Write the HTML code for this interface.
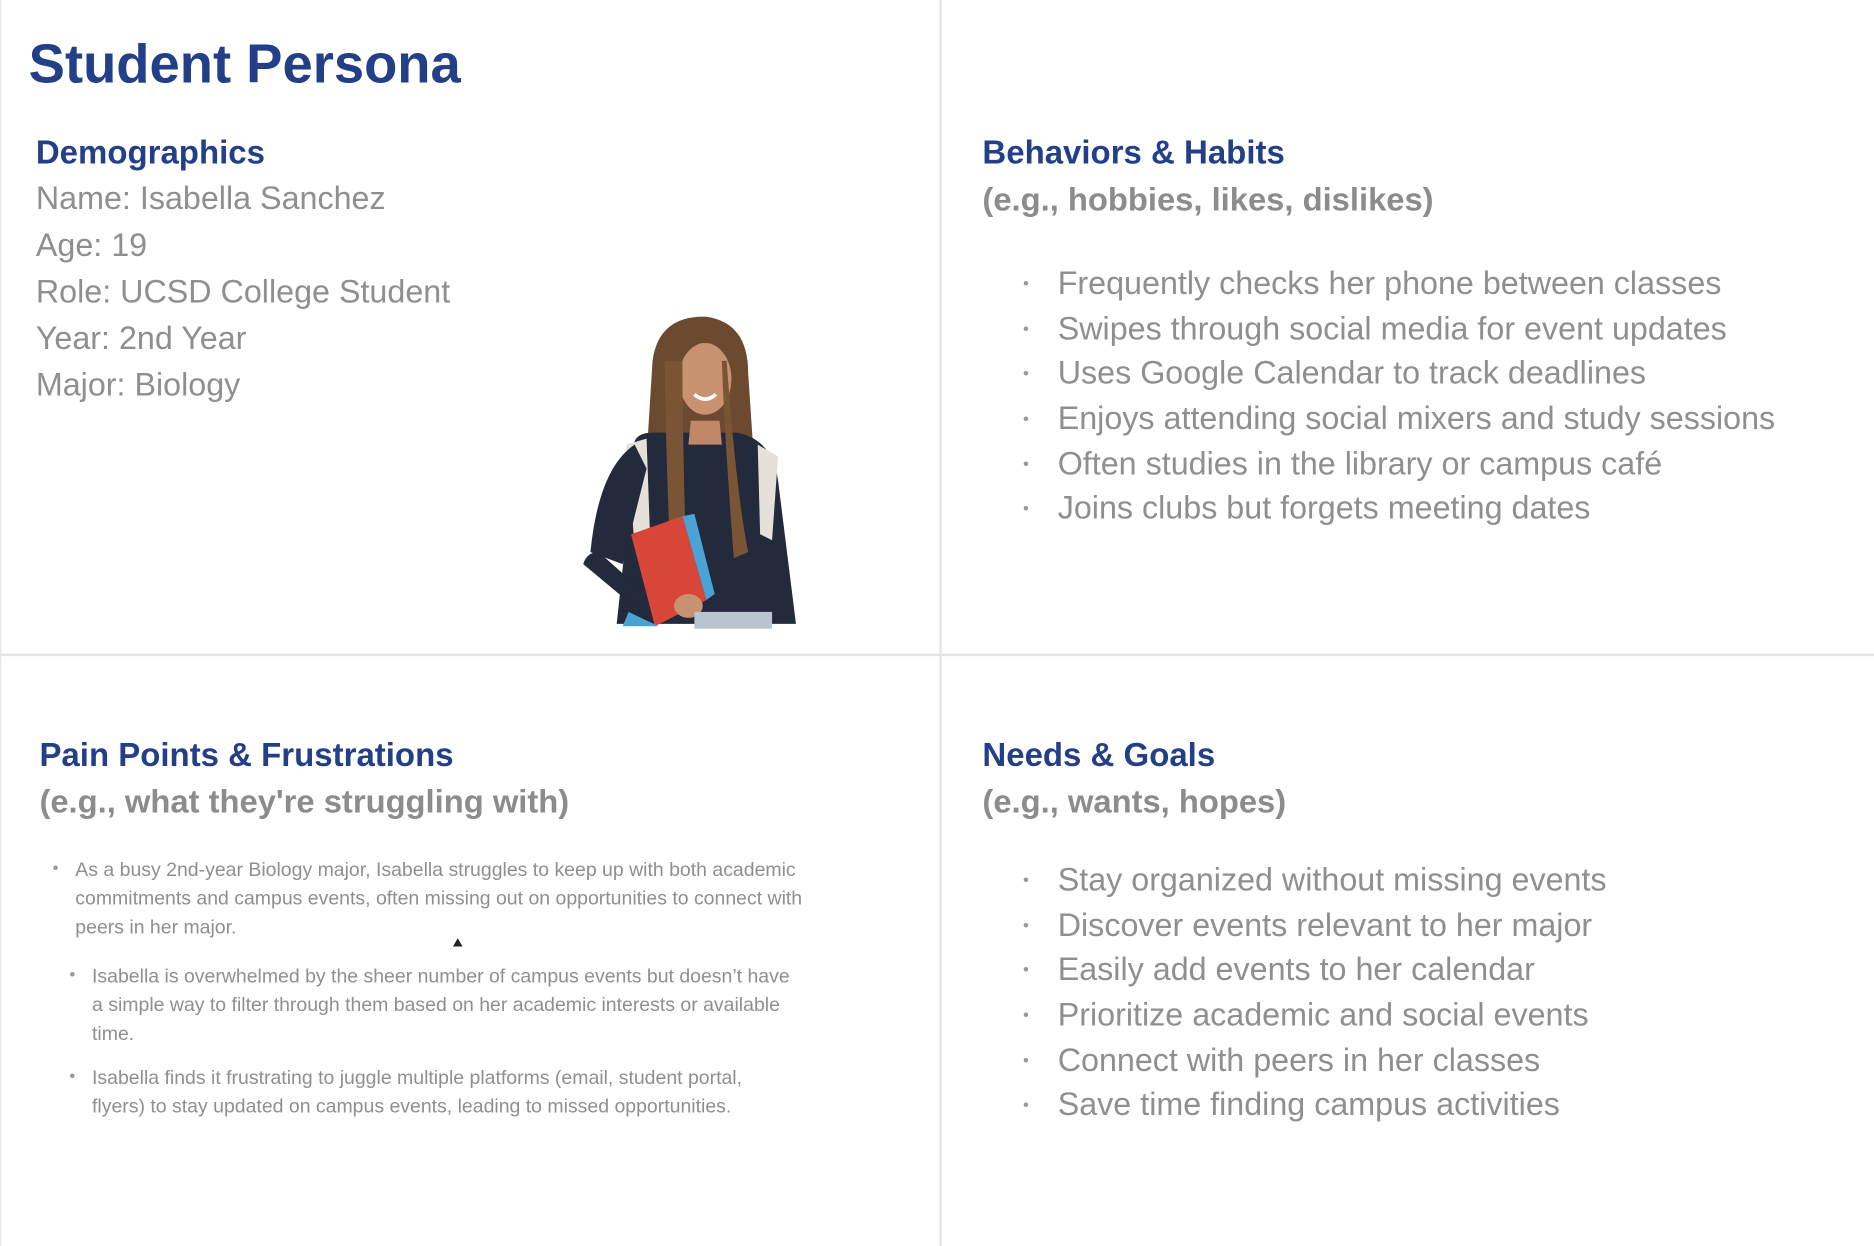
<!DOCTYPE html>
<html><head><meta charset="utf-8"><style>
html,body{margin:0;padding:0;background:#fff;overflow:hidden;}
#wrap{width:1568px;height:1043px;position:relative;transform:scale(1.19515);transform-origin:0 0;font-family:"Liberation Sans",sans-serif;}
.a{position:absolute;white-space:nowrap;}
.h{color:#223f88;font-weight:bold;font-size:27.6px;}
.s{color:#8c8c8c;font-weight:bold;font-size:27.4px;}
.t{color:#8f8f8f;font-size:27px;}
.b{color:#8f8f8f;font-size:27px;line-height:37.7px;height:37.7px;}
.sm{color:#8f8f8f;font-size:16.3px;line-height:24px;white-space:normal;}
.dot{color:#999;font-size:14px;}
.b .dot{display:inline-block;width:29px;vertical-align:top;line-height:37.7px;}
</style></head><body><div id="wrap">
<div class="a" style="left:0;top:0;width:1px;height:1043px;background:#e6e6e6"></div>
<div class="a" style="left:786px;top:0;width:2px;height:1043px;background:#e4e4e4"></div>
<div class="a" style="left:0;top:547px;width:1568px;height:2px;background:#e4e4e4"></div>

<div class="a" style="left:24px;top:28px;font-size:45.5px;font-weight:bold;color:#223f88">Student Persona</div>

<div class="a h" style="left:30px;top:112px">Demographics</div>
<div class="a t" style="left:30px;top:151px">Name: Isabella Sanchez</div>
<div class="a t" style="left:30px;top:190px">Age: 19</div>
<div class="a t" style="left:30px;top:229px">Role: UCSD College Student</div>
<div class="a t" style="left:30px;top:268px">Year: 2nd Year</div>
<div class="a t" style="left:30px;top:307px">Major: Biology</div>

<svg class="a" style="left:486px;top:262px" width="186" height="266" viewBox="0 0 186 266">
<path d="M60 40 Q65 2 105 3 Q140 8 140 50 L150 200 L50 200 Z" fill="#6b4a30"/>
<path d="M45 120 Q40 100 60 100 L130 100 Q160 105 165 140 L180 260 L30 260 Z" fill="#222a3c"/>
<path d="M38 110 L55 105 L58 190 L45 195 Z" fill="#e5e1d8"/>
<path d="M148 110 L165 120 L160 190 L150 185 Z" fill="#e5e1d8"/>
<path d="M8 200 Q15 130 45 110 L55 130 L35 210 Z" fill="#222a3c"/>
<path d="M2 210 Q5 200 15 200 L60 240 L50 250 Z" fill="#222a3c"/>
<ellipse cx="104" cy="55" rx="22" ry="30" fill="#c8916f"/>
<path d="M92 90 L116 90 L118 110 L90 110 Z" fill="#c08868"/>
<path d="M95 68 Q104 76 113 68" stroke="#fff" stroke-width="3" fill="none"/>
<path d="M70 40 Q72 150 75 200 L88 200 Q85 100 85 40 Z" fill="#7a5535"/>
<path d="M122 40 Q130 150 140 200 L128 205 Q120 100 118 40 Z" fill="#7a5535"/>
<path d="M42 185 L85 170 L105 240 L62 262 Z" fill="#d8463a"/>
<path d="M85 170 L95 168 L112 235 L105 240 Z" fill="#4aa3d4"/>
<path d="M35 262 L40 250 L65 262 Z" fill="#4aa3d4"/>
<ellipse cx="90" cy="245" rx="12" ry="10" fill="#c8916f"/>
<rect x="95" y="250" width="65" height="14" fill="#b8c4d0"/>
</svg>

<div class="a h" style="left:822px;top:112px">Behaviors &amp; Habits</div>
<div class="a s" style="left:822px;top:151px">(e.g., hobbies, likes, dislikes)</div>
<div class="a" style="left:856px;top:219px">
<div class="b"><span class="dot">•</span>Frequently checks her phone between classes</div>
<div class="b"><span class="dot">•</span>Swipes through social media for event updates</div>
<div class="b"><span class="dot">•</span>Uses Google Calendar to track deadlines</div>
<div class="b"><span class="dot">•</span>Enjoys attending social mixers and study sessions</div>
<div class="b"><span class="dot">•</span>Often studies in the library or campus café</div>
<div class="b"><span class="dot">•</span>Joins clubs but forgets meeting dates</div>
</div>

<div class="a h" style="left:33px;top:616px">Pain Points &amp; Frustrations</div>
<div class="a s" style="left:33px;top:655px">(e.g., what they're struggling with)</div>
<div class="a dot" style="left:44px;top:718px">•</div>
<div class="a sm" style="left:63px;top:716px;width:640px">As a busy 2nd-year Biology major, Isabella struggles to keep up with both academic commitments and campus events, often missing out on opportunities to connect with peers in her major.</div>
<div class="a" style="left:379px;top:785px;width:0;height:0;border-left:4px solid transparent;border-right:4px solid transparent;border-bottom:7px solid #222"></div>
<div class="a dot" style="left:58px;top:807px">•</div>
<div class="a sm" style="left:77px;top:805px;width:590px">Isabella is overwhelmed by the sheer number of campus events but doesn’t have a simple way to filter through them based on her academic interests or available time.</div>
<div class="a dot" style="left:58px;top:892px">•</div>
<div class="a sm" style="left:77px;top:890px;width:570px">Isabella finds it frustrating to juggle multiple platforms (email, student portal, flyers) to stay updated on campus events, leading to missed opportunities.</div>

<div class="a h" style="left:822px;top:616px">Needs &amp; Goals</div>
<div class="a s" style="left:822px;top:655px">(e.g., wants, hopes)</div>
<div class="a" style="left:856px;top:718px">
<div class="b"><span class="dot">•</span>Stay organized without missing events</div>
<div class="b"><span class="dot">•</span>Discover events relevant to her major</div>
<div class="b"><span class="dot">•</span>Easily add events to her calendar</div>
<div class="b"><span class="dot">•</span>Prioritize academic and social events</div>
<div class="b"><span class="dot">•</span>Connect with peers in her classes</div>
<div class="b"><span class="dot">•</span>Save time finding campus activities</div>
</div>
</div></body></html>
